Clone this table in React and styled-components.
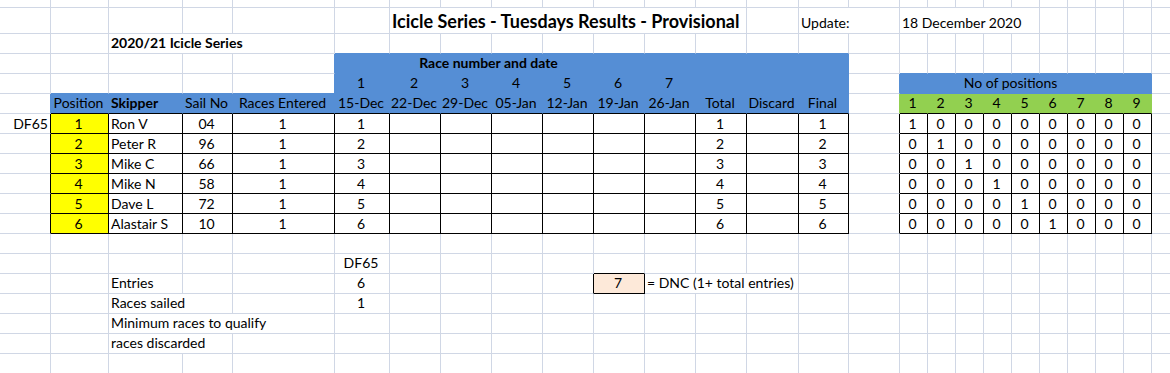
import React from 'react';
import styled, { createGlobalStyle } from 'styled-components';

const GRID = '#d0d7e5';
const BLUE = '#558ed5';
const GREEN = '#92d050';
const YELLOW = '#ffff00';
const PEACH = '#fde9d9';
const INK = '#000';

// column widths include the 1px gridline on the right edge
const COLS = [51, 58, 74, 50, 102, 55, 51, 51, 51, 51, 51, 51, 51, 52, 50, 51, 28, 28, 28, 28, 28, 28, 28, 28, 28, 80];
const ROWS = [8, 26, ...Array(17).fill(20)];

const GlobalStyle = createGlobalStyle`
  html, body {
    margin: 0;
    padding: 0;
    background: #fff;
  }
  body {
    font-family: Lato, "Liberation Sans", sans-serif;
    overflow: hidden;
  }
`;

const Sheet = styled.div`
  display: grid;
  grid-template-columns: ${COLS.map((w) => `${w}px`).join(' ')};
  grid-template-rows: ${ROWS.map((h) => `${h}px`).join(' ')};
  width: 1170px;
  height: 373px;
  overflow: hidden;
  font-family: Lato, "Liberation Sans", sans-serif;
  color: ${INK};
`;

const justify = { left: 'flex-start', center: 'center', right: 'flex-end' };

const Cell = styled.div`
  grid-column: span ${(p) => p.$span};
  box-sizing: border-box;
  min-width: 0;
  display: flex;
  align-items: flex-end;
  justify-content: ${(p) => justify[p.$align]};
  padding: 0 ${(p) => (p.$align === 'left' ? 0 : 2)}px ${(p) => p.$pb}px ${(p) => (p.$align === 'center' ? 0 : 2)}px;
  background: ${(p) => p.$fill || '#fff'};
  border-right: 1px solid ${(p) => p.$right};
  border-bottom: 1px solid ${(p) => p.$bottom};
  font-size: ${(p) => p.$size}px;
  font-weight: ${(p) => (p.$bold ? 700 : 400)};
  line-height: ${(p) => p.$size}px;
  white-space: nowrap;
`;

const inRange = (v, a, b) => v >= a && v <= b;

const fillAt = (r, c) => {
  if (inRange(r, 3, 5) && inRange(c, 5, 14)) return BLUE;
  if (r === 5 && inRange(c, 1, 4)) return BLUE;
  if (r === 4 && inRange(c, 16, 24)) return BLUE;
  if (r === 5 && inRange(c, 16, 24)) return GREEN;
  if (inRange(r, 6, 11) && c === 1) return YELLOW;
  if (r === 14 && c === 10) return PEACH;
  return null;
};

const boxed = (r, c) =>
  (inRange(r, 6, 11) && (inRange(c, 1, 14) || inRange(c, 16, 24))) || (r === 14 && c === 10);

const skippers = [
  { name: 'Ron V', sail: '04' },
  { name: 'Peter R', sail: '96' },
  { name: 'Mike C', sail: '66' },
  { name: 'Mike N', sail: '58' },
  { name: 'Dave L', sail: '72' },
  { name: 'Alastair S', sail: '10' },
];

const races = [
  ['1', '15-Dec'],
  ['2', '22-Dec'],
  ['3', '29-Dec'],
  ['4', '05-Jan'],
  ['5', '12-Jan'],
  ['6', '19-Jan'],
  ['7', '26-Jan'],
];

const buildCells = () => {
  const cells = {};
  const put = (r, c, text, opts = {}) => {
    cells[`${r},${c}`] = { text, span: 1, align: 'center', ...opts };
  };

  put(1, 6, 'Icicle Series - Tuesdays Results - Provisional', { span: 7, align: 'left', bold: true, size: 18 });
  put(1, 14, 'Update:', { span: 2, align: 'left' });
  put(1, 16, '18 December 2020', { span: 5, align: 'left' });

  put(2, 2, '2020/21 Icicle Series', { span: 3, align: 'left', bold: true });

  put(3, 5, 'Race number and date', { span: 6, bold: true });
  races.forEach(([n, date], i) => {
    put(4, 5 + i, n);
    put(5, 5 + i, date);
  });

  put(5, 1, 'Position');
  put(5, 2, 'Skipper', { align: 'left', bold: true });
  put(5, 3, 'Sail No');
  put(5, 4, 'Races Entered');
  put(5, 12, 'Total');
  put(5, 13, 'Discard');
  put(5, 14, 'Final');

  put(4, 16, 'No of positions', { span: 8 });
  for (let k = 0; k < 9; k += 1) put(5, 16 + k, String(k + 1));

  put(6, 0, 'DF65', { align: 'right' });
  skippers.forEach((s, i) => {
    const r = 6 + i;
    const place = String(i + 1);
    put(r, 1, place);
    put(r, 2, s.name, { align: 'left' });
    put(r, 3, s.sail);
    put(r, 4, '1');
    put(r, 5, place);
    put(r, 12, place);
    put(r, 14, place);
    for (let k = 0; k < 9; k += 1) put(r, 16 + k, k === i ? '1' : '0');
  });

  put(13, 5, 'DF65');
  put(14, 2, 'Entries', { align: 'left' });
  put(14, 5, '6');
  put(14, 10, '7');
  put(14, 11, '= DNC (1+ total entries)', { span: 3, align: 'left' });
  put(15, 2, 'Races sailed', { span: 2, align: 'left' });
  put(15, 5, '1');
  put(16, 2, 'Minimum races to qualify', { span: 3, align: 'left' });
  put(17, 2, 'races discarded', { span: 2, align: 'left' });

  return cells;
};

const edgeColor = (self, nextBoxed, selfBoxed, nextFill) => {
  if (selfBoxed || nextBoxed) return INK;
  return self || nextFill || GRID;
};

const App = () => {
  const cells = buildCells();
  const out = [];

  ROWS.forEach((_, r) => {
    let c = 0;
    while (c < COLS.length) {
      const cell = cells[`${r},${c}`] || { text: '', span: 1, align: 'center' };
      const last = c + cell.span - 1;
      const fill = fillAt(r, c);
      const right = edgeColor(fillAt(r, last), boxed(r, last + 1), boxed(r, last), fillAt(r, last + 1));
      const bottom = edgeColor(fill, boxed(r + 1, c), boxed(r, c), fillAt(r + 1, c));
      const dataRow = inRange(r, 6, 11);
      out.push(
        <Cell
          key={`${r}-${c}`}
          $span={cell.span}
          $align={cell.align}
          $bold={cell.bold}
          $size={cell.size || 14}
          $pb={dataRow ? 2 : 3}
          $fill={fill}
          $right={right}
          $bottom={bottom}
        >
          {cell.text}
        </Cell>
      );
      c += cell.span;
    }
  });

  return (
    <>
      <GlobalStyle />
      <Sheet>{out}</Sheet>
    </>
  );
};

export default App;
